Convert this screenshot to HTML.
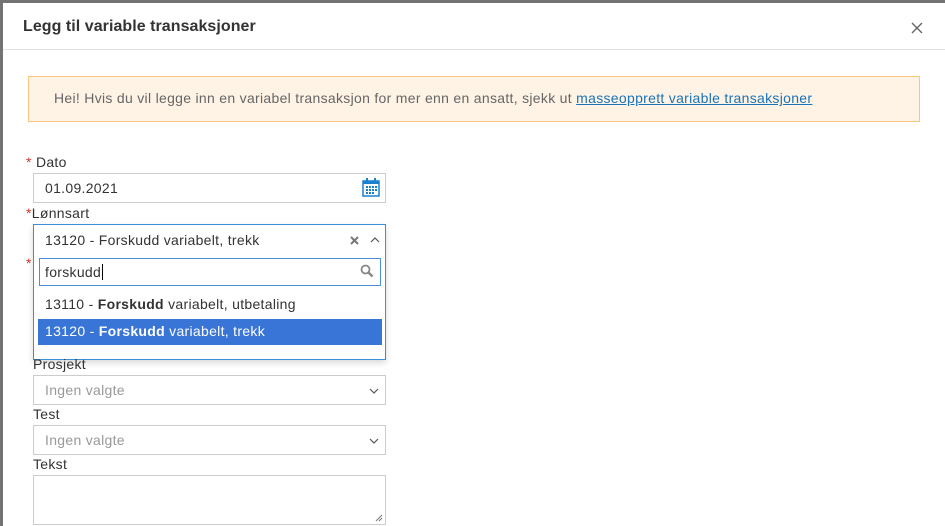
<!DOCTYPE html>
<html><head><meta charset="utf-8"><style>
*{box-sizing:border-box;margin:0;padding:0}
body{width:945px;height:526px;overflow:hidden;background:#737373;font-family:"Liberation Sans",sans-serif;position:relative;letter-spacing:0.3px}
.modal{position:absolute;left:3px;top:3px;width:942px;height:523px;background:#fff}
.a{position:absolute}
.hdr{left:0;top:0;width:942px;height:47px;border-bottom:1px solid #e2e2e2}
.title{left:20px;top:15px;font-size:16px;color:#333;font-weight:bold;letter-spacing:0.05px}
.close{left:908px;top:14px;font-size:20px;color:#666}
.alert{left:25px;top:73px;width:892px;height:46px;background:#fef3e5;border:1px solid #fbc77f;font-size:14px;color:#666;padding:13px 0 0 25px}
.alert u{color:#1a73b8}
.lbl{font-size:14px;color:#333}
.star{color:#d9342b}
.inp{border:1px solid #ccc;background:#fff;width:353px;height:30px;font-size:14px;color:#333;padding:6px 0 0 11px}
.ph{color:#999}
.chev{position:absolute;right:6px;top:8px}
</style></head><body>
<div class="modal">
<div class="a hdr"></div>
<div class="a title">Legg til variable transaksjoner</div>
<div class="a close"><svg width="12" height="12" viewBox="0 0 12 12"><path d="M1 1L11 11M11 1L1 11" stroke="#666" stroke-width="1.4"/></svg></div>
<div class="a alert">Hei! Hvis du vil legge inn en variabel transaksjon for mer enn en ansatt, sjekk ut <u>masseopprett variable transaksjoner</u></div>

<div class="a lbl" style="left:23px;top:151px"><span class="star">*</span> Dato</div>
<div class="a inp" style="left:30px;top:170px">01.09.2021
<svg style="position:absolute;right:5px;top:4px" width="18" height="19" viewBox="0 0 18 19"><rect x="1" y="3" width="16" height="15" fill="none" stroke="#1a80d0" stroke-width="1.5"/><rect x="1" y="3" width="16" height="3" fill="#1a80d0"/><rect x="4" y="0" width="2" height="5" fill="#1a80d0"/><rect x="12" y="0" width="2" height="5" fill="#1a80d0"/><g fill="#1a80d0"><rect x="4" y="8" width="2" height="2"/><rect x="7" y="8" width="2" height="2"/><rect x="10" y="8" width="2" height="2"/><rect x="13" y="8" width="2" height="2"/><rect x="4" y="11" width="2" height="2"/><rect x="7" y="11" width="2" height="2"/><rect x="10" y="11" width="2" height="2"/><rect x="13" y="11" width="2" height="2"/><rect x="4" y="14" width="2" height="2"/><rect x="7" y="14" width="2" height="2"/><rect x="10" y="14" width="2" height="2"/></g></svg></div>

<div class="a lbl" style="left:23px;top:202px"><span class="star">*</span>Lønnsart</div>
<div class="a" style="left:23px;top:252px;font-size:14px" ><span class="star">*</span></div>
<div class="a" style="left:30px;top:221px;width:353px;height:136px;border:1px solid #3b8fd9;background:#fff;box-shadow:0 3px 6px rgba(0,0,0,.15)">
 <div class="a" style="left:11px;top:7px;font-size:14px;color:#333">13120 - Forskudd variabelt, trekk</div>
 <svg class="a" style="left:316px;top:11px" width="9" height="9" viewBox="0 0 9 9"><path d="M1 1L8 8M8 1L1 8" stroke="#777" stroke-width="2"/></svg>
 <svg class="a" style="left:336px;top:12px" width="10" height="6" viewBox="0 0 10 6"><path d="M1 5L5 1L9 5" stroke="#555" stroke-width="1.2" fill="none"/></svg>
 <div class="a" style="left:5px;top:33px;width:342px;height:28px;border:1px solid #4a90d9;font-size:14px;color:#333;padding:5px 0 0 5px">forskudd<span style="border-left:1px solid #000;margin-left:1px"></span>
  <svg style="position:absolute;right:6px;top:5px" width="14" height="14" viewBox="0 0 14 14"><circle cx="5.5" cy="5.5" r="4" stroke="#888" stroke-width="1.8" fill="none"/><path d="M8.5 8.5L12.5 12.5" stroke="#888" stroke-width="2.4"/></svg></div>
 <div class="a" style="left:11px;top:71px;font-size:14px;color:#333">13110 - <b>Forskudd</b> variabelt, utbetaling</div>
 <div class="a" style="left:4px;top:94px;width:344px;height:26px;background:#3875d7;color:#fff;font-size:14px;padding:4px 0 0 7px">13120 - <b>Forskudd</b> variabelt, trekk</div>
</div>

<div class="a lbl" style="left:30px;top:353px">Prosjekt</div>
<div class="a inp" style="left:30px;top:372px"><span class="ph">Ingen valgte</span><svg class="chev" width="10" height="6" viewBox="0 0 10 6" style="top:12px"><path d="M1 1L5 5L9 1" stroke="#555" stroke-width="1.2" fill="none"/></svg></div>
<div class="a lbl" style="left:30px;top:403px">Test</div>
<div class="a inp" style="left:30px;top:422px"><span class="ph">Ingen valgte</span><svg class="chev" width="10" height="6" viewBox="0 0 10 6" style="top:12px"><path d="M1 1L5 5L9 1" stroke="#555" stroke-width="1.2" fill="none"/></svg></div>
<div class="a lbl" style="left:30px;top:453px">Tekst</div>
<div class="a" style="left:30px;top:472px;width:353px;height:50px;border:1px solid #ccc">
<svg style="position:absolute;right:2px;bottom:2px" width="8" height="8" viewBox="0 0 8 8"><path d="M7 1L1 7M7 4L4 7" stroke="#777" stroke-width="1"/></svg></div>
</div>
</body></html>
